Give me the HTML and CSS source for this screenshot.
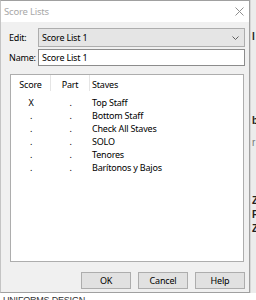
FILE: index.html
```html
<!DOCTYPE html>
<html lang="en">
<head>
  <meta charset="UTF-8" />
  <title>Score Lists</title>
  <link rel="stylesheet" href="styles.css">
</head>
<body>
  <div class="screen">
    <div class="dialog">
      <div class="titlebar">
        <span class="title">Score Lists</span>
        <svg class="close" width="9" height="9" viewBox="0 0 9 9">
          <path d="M0.5 0.5 L8.5 8.5 M8.5 0.5 L0.5 8.5" stroke="#8f8f8f" stroke-width="1" fill="none"/>
        </svg>
      </div>
      <div class="body">
        <div class="field">
          <label class="label">Edit:</label>
          <div class="combo">
            <span>Score List 1</span>
            <svg width="7" height="4" viewBox="0 0 7 4">
              <path d="M0.5 0.5 L3.5 3.5 L6.5 0.5" stroke="#606060" stroke-width="1" fill="none"/>
            </svg>
          </div>
        </div>
        <div class="field name">
          <label class="label">Name:</label>
          <div class="input">Score List 1</div>
        </div>
        <div class="list">
          <div class="row head">
            <span class="c-score">Score</span>
            <span class="c-part">Part</span>
            <span class="c-staves">Staves</span>
          </div>
          <div class="row"><span class="c-score">X</span><span class="c-part">.</span><span class="c-staves">Top Staff</span></div>
          <div class="row"><span class="c-score">.</span><span class="c-part">.</span><span class="c-staves">Bottom Staff</span></div>
          <div class="row"><span class="c-score">.</span><span class="c-part">.</span><span class="c-staves">Check All Staves</span></div>
          <div class="row"><span class="c-score">.</span><span class="c-part">.</span><span class="c-staves">SOLO</span></div>
          <div class="row"><span class="c-score">.</span><span class="c-part">.</span><span class="c-staves">Tenores</span></div>
          <div class="row"><span class="c-score">.</span><span class="c-part">.</span><span class="c-staves">Barítonos y Bajos</span></div>
        </div>
        <div class="buttons">
          <button class="btn">OK</button>
          <button class="btn">Cancel</button>
          <button class="btn">Help</button>
        </div>
      </div>
    </div>
    <div class="behind">
      <span class="bit tall">l</span>
      <span class="bit">b</span>
      <span class="bit light">r</span>
      <span class="bit">Z</span>
      <span class="bit">F</span>
      <span class="bit">Z</span>
    </div>
  </div>
  <div class="under">UNIFORMS DESIGN</div>
</body>
</html>
```

FILE: styles.css
```css
* {
  margin: 0;
  padding: 0;
  box-sizing: border-box;
}

body {
  font-family: "Noto Sans", "DejaVu Sans", sans-serif;
  font-size: 9px;
  letter-spacing: -0.2px;
  color: #000;
  background-color: #fff;
  width: 256px;
  height: 300px;
  overflow: hidden;
}

.screen {
  display: flex;
  height: 293px;
}

.dialog {
  width: 250px;
  height: 293px;
  border: 1px solid #a0a0a0;
  border-left-color: #c4c4c4;
  background-color: #f0f0f0;
  display: flex;
  flex-direction: column;
  flex-shrink: 0;
}

.titlebar {
  height: 21px;
  background-color: #fff;
  display: flex;
  align-items: center;
  justify-content: space-between;
  padding: 0 5px 0 3px;
  flex-shrink: 0;
}

.title {
  color: #a8a8a8;
  font-size: 9.5px;
}

.body {
  flex: 1;
  padding: 6px 4px 0 8px;
  display: flex;
  flex-direction: column;
}

.field {
  display: flex;
  align-items: center;
  height: 19px;
}

.field.name {
  height: 17px;
  margin-top: 2px;
}

.label {
  width: 29px;
  flex-shrink: 0;
}

.combo {
  flex: 1;
  height: 19px;
  background-color: #e5e5e5;
  border: 1px solid #adadad;
  display: flex;
  align-items: center;
  justify-content: space-between;
  padding: 0 5px 0 3px;
}

.input {
  flex: 1;
  height: 17px;
  background-color: #fff;
  border: 1px solid #8c8c8c;
  display: flex;
  align-items: center;
  padding: 0 3px;
}

.list {
  margin: 8px 1px 0 1px;
  height: 188px;
  background-color: #fff;
  border: 1px solid #adadad;
}

.row {
  display: flex;
  height: 13px;
  align-items: center;
  line-height: 13px;
}

.row.head {
  height: 21px;
  align-items: flex-start;
}

.row.head span {
  height: 16px;
  line-height: 20px;
}

.row.head .c-score,
.row.head .c-part {
  border-right: 1px solid #e5e5e5;
}

.c-score {
  width: 40px;
  text-align: center;
}

.c-part {
  width: 39px;
  text-align: center;
}

.c-staves {
  padding-left: 2px;
}

.row.head .c-staves {
  padding-left: 2px;
}

.buttons {
  display: flex;
  justify-content: flex-end;
  gap: 7px;
  margin-top: 10px;
}

.btn {
  width: 50px;
  height: 17px;
  font-family: inherit;
  font-size: 9px;
  letter-spacing: -0.2px;
  background-color: #e1e1e1;
  border: 1px solid #adadad;
  color: #000;
}

.behind {
  flex: 1;
  background-color: #ececec;
  border-left: 1px solid #d6d6d6;
  display: flex;
  flex-direction: column;
  padding: 30px 0 0 1px;
  overflow: hidden;
  font-family: "Liberation Sans", sans-serif;
  font-weight: bold;
  font-size: 10px;
  line-height: 14px;
  color: #222;
}

.bit.tall {
  margin-bottom: 70px;
}

.bit.light {
  color: #777;
  font-weight: normal;
  margin: 8px 0 44px;
}

.under {
  font-family: "Liberation Sans", sans-serif;
  font-size: 9px;
  line-height: 10px;
  color: #333;
  padding: 2px 0 0 3px;
  height: 7px;
  overflow: hidden;
}
```
